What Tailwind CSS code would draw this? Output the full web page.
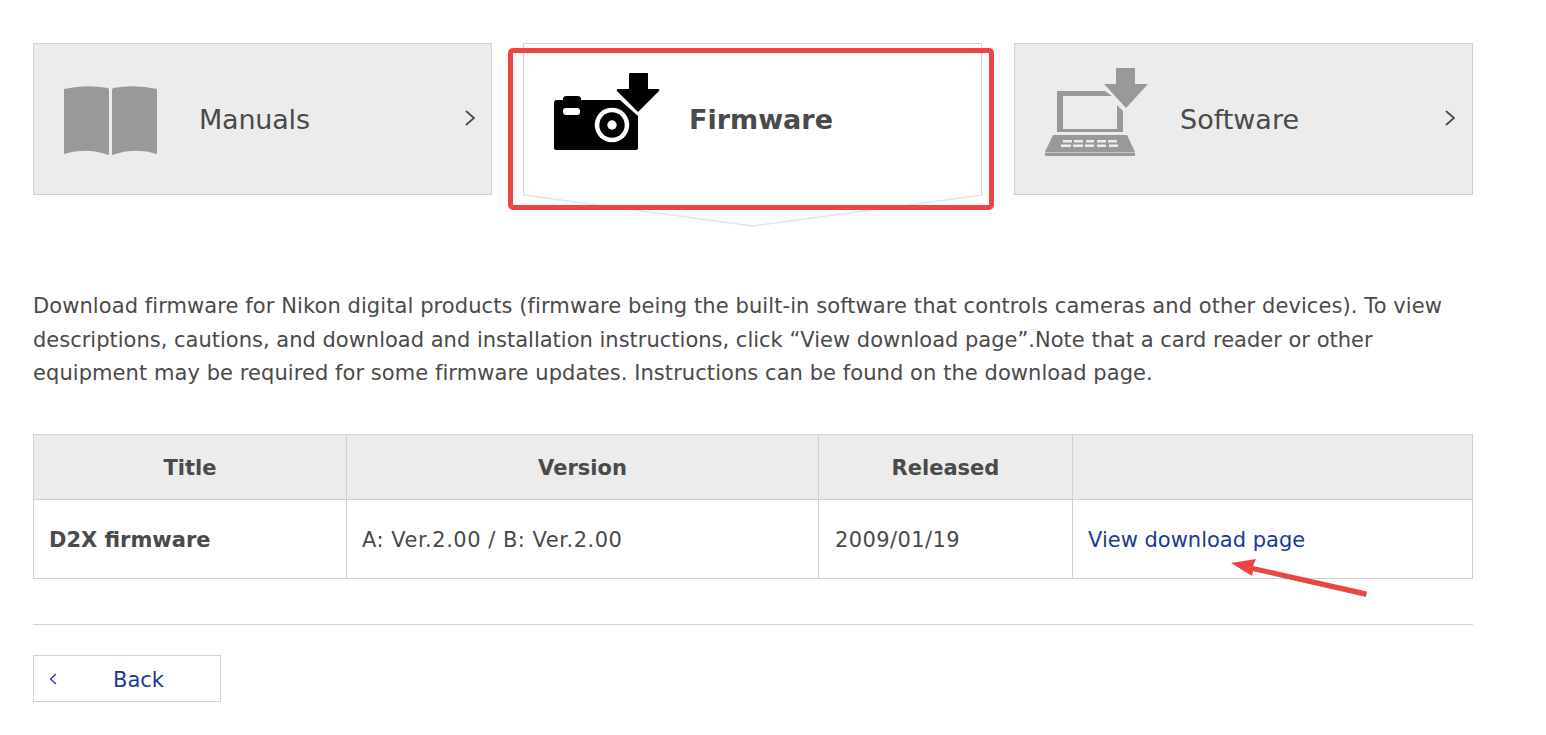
<!DOCTYPE html>
<html lang="en">
<head>
  <meta charset="UTF-8" />
  <meta name="viewport" content="width=device-width, initial-scale=1.0"/>
  <title>Firmware</title>
  <script src="https://cdn.jsdelivr.net/npm/@tailwindcss/browser@4"></script>
</head>
<body class="bg-white h-[735px] overflow-hidden font-['DejaVu_Sans',sans-serif] text-[#4a4a4a]">
  <div class="relative w-[1440px] ml-[33px] pt-[43px]">

    <!-- TABS -->
    <div class="flex">
      <a class="w-[459px] h-[152px] bg-[#ececec] border border-[#d2d2d2] flex items-center relative">
        <svg class="ml-[30px] mt-[3px] w-[93px] h-[69px] shrink-0" viewBox="0 0 93 69" fill="#999999">
          <path d="M0 3Q22 -2 44 2Q45 3 45 5V69Q22 61 0 68Z"/>
          <path d="M93 3Q71 -2 49 2Q48 3 48 5V69Q71 61 93 68Z"/>
        </svg>
        <span class="ml-[42px] mt-[2px] text-[27px] tracking-[-0.2px]">Manuals</span>
        <svg class="absolute right-[16px] top-[66px] w-[10px] h-[16px]" viewBox="0 0 10 16" fill="none" stroke="#4a4a4a" stroke-width="1.8"><path d="M1 1L9 8L1 15"/></svg>
      </a>

      <a class="ml-[31px] w-[459px] h-[152px] bg-white border-x border-t border-[#d2d2d2] flex items-center relative">
        <svg class="ml-[29px] -mt-[14px] w-[107px] h-[80px] shrink-0" viewBox="0 0 107 80" fill="#000000">
          <path d="M1 30Q1 27 4 27H10V25Q11 23 13 23H25Q27 23 28 25V27H67L85 43V75Q85 77 83 77H3Q1 77 1 75Z"/>
          <rect x="10" y="35" width="17" height="7" rx="3" fill="#ffffff"/>
          <circle cx="59" cy="52" r="17.3" fill="#ffffff"/>
          <circle cx="59" cy="52" r="12.7" fill="#000000"/>
          <circle cx="59" cy="52" r="4.7" fill="#ffffff"/>
          <path d="M76 1Q76 0 77 0H94Q95 0 95 1V16H105Q107 16 106 18L85 39L64 18Q63 16 65 16H76Z"/>
        </svg>
        <span class="ml-[29px] mt-[2px] text-[27px] font-bold">Firmware</span>
        <svg class="absolute left-[-1px] top-[150px] w-[460px] h-[34px]" viewBox="0 0 460 34" fill="#ffffff" stroke="#e4e4e4" stroke-width="1.5"><path d="M0.5 1L230 32L459.5 1"/></svg>
      </a>

      <a class="ml-[32px] w-[459px] h-[152px] bg-[#ececec] border border-[#d2d2d2] flex items-center relative">
        <svg class="ml-[30px] -mt-[14px] w-[103px] h-[88px] shrink-0" viewBox="0 0 103 88" fill="#999999">
          <path d="M12 23H60L67 28H18V61H72V37L78 43V64H12Z"/>
          <path d="M8 67H82L90 84V88H0V84Z"/>
          <path d="M71 0H90V16H103L81 40L59 16H71Z"/>
          <g fill="#ececec">
            <rect x="18" y="72" width="9" height="2.5"/><rect x="29" y="72" width="9" height="2.5"/><rect x="41" y="72" width="8" height="2.5"/><rect x="52" y="72" width="9" height="2.5"/><rect x="63" y="72" width="9" height="2.5"/>
            <rect x="16" y="76.5" width="10" height="2.5"/><rect x="28" y="76.5" width="10" height="2.5"/><rect x="40" y="76.5" width="9" height="2.5"/><rect x="52" y="76.5" width="9" height="2.5"/><rect x="64" y="76.5" width="9" height="2.5"/>
          </g>
          <rect x="0" y="84" width="90" height="1" fill="#c4c4c4"/>
        </svg>
        <span class="ml-[32px] mt-[2px] text-[27px]">Software</span>
        <svg class="absolute right-[17px] top-[66px] w-[10px] h-[16px]" viewBox="0 0 10 16" fill="none" stroke="#4a4a4a" stroke-width="1.8"><path d="M1 1L9 8L1 15"/></svg>
      </a>
    </div>

    <!-- DESCRIPTION -->
    <p class="mt-[95px] text-[21px] leading-[33.6px] tracking-[0.085px]">Download firmware for Nikon digital products (firmware being the built-in software that controls cameras and other devices). To view <span class="tracking-[0px]">descriptions, cautions, and download and installation instructions, click “View download page”.Note that a card reader or other</span> <span class="tracking-[0.065px]">equipment may be required for some firmware updates. Instructions can be found on the download page.</span></p>

    <!-- TABLE -->
    <table class="mt-[43px] w-full table-fixed border-collapse text-[21px]">
      <thead>
        <tr class="h-[65px] bg-[#ececec]">
          <th class="w-[313px] border border-[#d2d2d2] pt-[4px] font-bold">Title</th>
          <th class="w-[472px] border border-[#d2d2d2] pt-[4px] font-bold">Version</th>
          <th class="w-[254px] border border-[#d2d2d2] pt-[4px] font-bold">Released</th>
          <th class="border border-[#d2d2d2]"></th>
        </tr>
      </thead>
      <tbody>
        <tr class="h-[79px]">
          <td class="border border-[#d2d2d2] px-[15px] pt-[4px] font-bold">D2X firmware</td>
          <td class="border border-[#d2d2d2] px-[15px] pt-[4px] tracking-[0.5px]">A: Ver.2.00 / B: Ver.2.00</td>
          <td class="border border-[#d2d2d2] px-[16px] pt-[4px] tracking-[0.4px]">2009/01/19</td>
          <td class="border border-[#d2d2d2] px-[15px] pt-[4px]"><a class="text-[#1c3a94]">View download page</a></td>
        </tr>
      </tbody>
    </table>

    <hr class="mt-[45px] border-0 border-t border-[#d2d2d2]" />

    <!-- BACK -->
    <a class="mt-[30px] w-[188px] h-[47px] border border-[#d2d2d2] flex items-center relative text-[#1c3a94] text-[21px]">
      <svg class="absolute left-[15px] top-[17px] w-[8px] h-[12px]" viewBox="0 0 8 12" fill="none" stroke="#1c3a94" stroke-width="1.3"><path d="M7 1L1.5 6L7 11"/></svg>
      <span class="ml-[79px] mt-[4px]">Back</span>
    </a>

    <!-- ANNOTATIONS -->
    <div class="absolute left-[475px] top-[48px] w-[486px] h-[162px] border-[5px] border-[#ef4444] rounded-[5px]"></div>
    <svg class="absolute left-[1190px] top-[550px] w-[150px] h-[55px]" viewBox="0 0 150 55">
      <path d="M30 21L143 47L143 45L30 19Z" fill="#8a8a8a"/>
      <path d="M8 13L33 9L30 16L144 41.5L143 46.5L30 21L29 26Z" fill="#ef4444"/>
    </svg>
  </div>
</body>
</html>
